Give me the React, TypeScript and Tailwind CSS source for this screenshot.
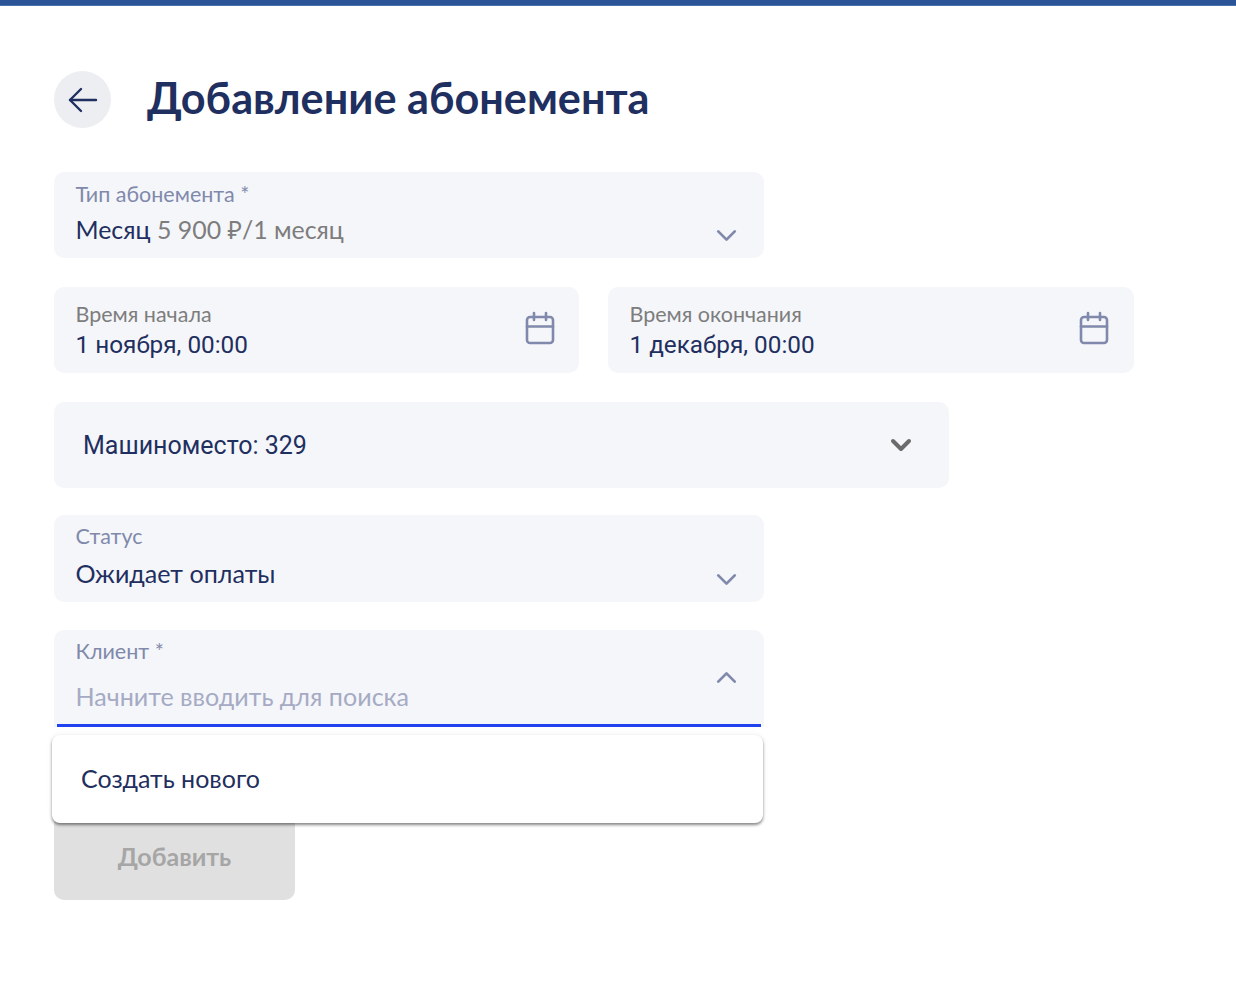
import { ChevronDown, ChevronUp } from 'lucide-react';

function CalendarIcon() {
  return (
    <svg width="30" height="34" viewBox="0 0 30 34" fill="none" stroke="#8089ab" strokeWidth="2.6" strokeLinecap="round" strokeLinejoin="round">
      <rect x="2" y="6" width="26" height="26" rx="3" />
      <path d="M2 15.5H28" />
      <path d="M9 2V9M21 2V9" />
    </svg>
  );
}

function BackArrow() {
  return (
    <svg width="30" height="26" viewBox="0 0 30 26" fill="none" stroke="#1f2f60" strokeWidth="2.4" strokeLinecap="round" strokeLinejoin="round">
      <path d="M28 13H2" />
      <path d="M13 2L2 13L13 24" />
    </svg>
  );
}

function Label({ children }: { children: React.ReactNode }) {
  return <div className="text-[21.5px] leading-[24px] text-[#8089ab]">{children}</div>;
}

export default function App() {
  return (
    <div className="min-h-[992px] bg-white font-['Lato','Noto_Sans',sans-serif] text-[#1f2f60]">
      <div className="h-[6px] border-b border-[#4a72a8] bg-[#2b5597]" />

      <div className="relative px-[54px] pt-[65px]">
        {/* заголовок */}
        <div className="flex items-center">
          <button className="flex h-[57px] w-[57px] items-center justify-center rounded-full bg-[#edeef2]">
            <BackArrow />
          </button>
          <h1 className="ml-[36px] -translate-y-[2px] text-[43.2px] leading-[57px] font-bold">Добавление абонемента</h1>
        </div>

        {/* тип абонемента */}
        <div className="mt-[44px] flex h-[86px] w-[710px] items-start justify-between rounded-[10px] bg-[#f5f6fa] pt-[10px] pr-[21px] pl-[21.5px]">
          <div>
            <Label>Тип абонемента *</Label>
            <div className="mt-[5px] text-[24.9px] leading-[36px]">
              Месяц <span className="text-[#7d7d7d]">5 900 ₽/1 месяц</span>
            </div>
          </div>
          <ChevronDown size={33} strokeWidth={2} color="#8089ab" className="mt-[37px]" />
        </div>

        {/* даты */}
        <div className="mt-[29px] flex w-[1080px] gap-[29px]">
          <div className="flex h-[86px] w-[525px] items-center justify-between rounded-[10px] bg-[#f5f6fa] pr-[24px] pl-[21.5px]">
            <div>
              <div className="-translate-y-[1px] text-[21.5px] leading-[28px] text-[#7d7d7d]">Время начала</div>
              <div className="translate-y-[1px] font-['Roboto',sans-serif] text-[24.3px] leading-[30px]">1 ноября, 00:00</div>
            </div>
            <div className="-translate-y-[2px]">
              <CalendarIcon />
            </div>
          </div>
          <div className="flex h-[86px] w-[526px] items-center justify-between rounded-[10px] bg-[#f5f6fa] pr-[25px] pl-[21.5px]">
            <div>
              <div className="-translate-y-[1px] text-[21.5px] leading-[28px] text-[#7d7d7d]">Время окончания</div>
              <div className="translate-y-[1px] font-['Roboto',sans-serif] text-[24.3px] leading-[30px]">1 декабря, 00:00</div>
            </div>
            <div className="-translate-y-[2px]">
              <CalendarIcon />
            </div>
          </div>
        </div>

        {/* машиноместо */}
        <div className="mt-[29px] flex h-[86px] w-[895px] items-center justify-between rounded-[10px] bg-[#f5f6fa] pr-[32px] pl-[29px]">
          <div className="translate-y-[1px] font-['Roboto',sans-serif] text-[25px]">Машиноместо: 329</div>
          <ChevronDown size={32} strokeWidth={3} color="#6b6b6b" />
        </div>

        {/* статус */}
        <div className="mt-[27px] flex h-[87px] w-[710px] items-start justify-between rounded-[10px] bg-[#f5f6fa] pt-[9px] pr-[21px] pl-[21.5px]">
          <div>
            <Label>Статус</Label>
            <div className="mt-[7px] text-[25.1px] leading-[36px]">Ожидает оплаты</div>
          </div>
          <ChevronDown size={33} strokeWidth={2} color="#8089ab" className="mt-[39px]" />
        </div>

        {/* клиент */}
        <div className="relative mt-[28px] h-[97px] w-[710px] rounded-t-[10px] bg-[#f5f6fa] px-[21.5px] pt-[9px]">
          <Label>Клиент *</Label>
          <div className="mt-[16px] text-[25.1px] leading-[34px] text-[#a5abc4]">Начните вводить для поиска</div>
          <ChevronUp size={33} strokeWidth={2} color="#8089ab" className="absolute top-[31px] right-[21px]" />
          <div className="absolute right-[3px] bottom-0 left-[3px] h-[3px] bg-[#2142ef]" />
        </div>

        {/* кнопка */}
        <button className="mt-[87px] flex h-[86px] w-[241px] items-center justify-center rounded-[10px] bg-[#e0e0e0] text-[25px] font-bold text-[#a6a6a6]">
          Добавить
        </button>

        {/* выпадающий список */}
        <div className="absolute top-[729px] left-[52px] flex h-[88px] w-[711px] items-center rounded-[8px] bg-white pl-[29px] text-[25px] shadow-[0_2px_3px_rgba(0,0,0,0.45),0_0_6px_rgba(0,0,0,0.06)]">
          Создать нового
        </div>
      </div>
    </div>
  );
}
